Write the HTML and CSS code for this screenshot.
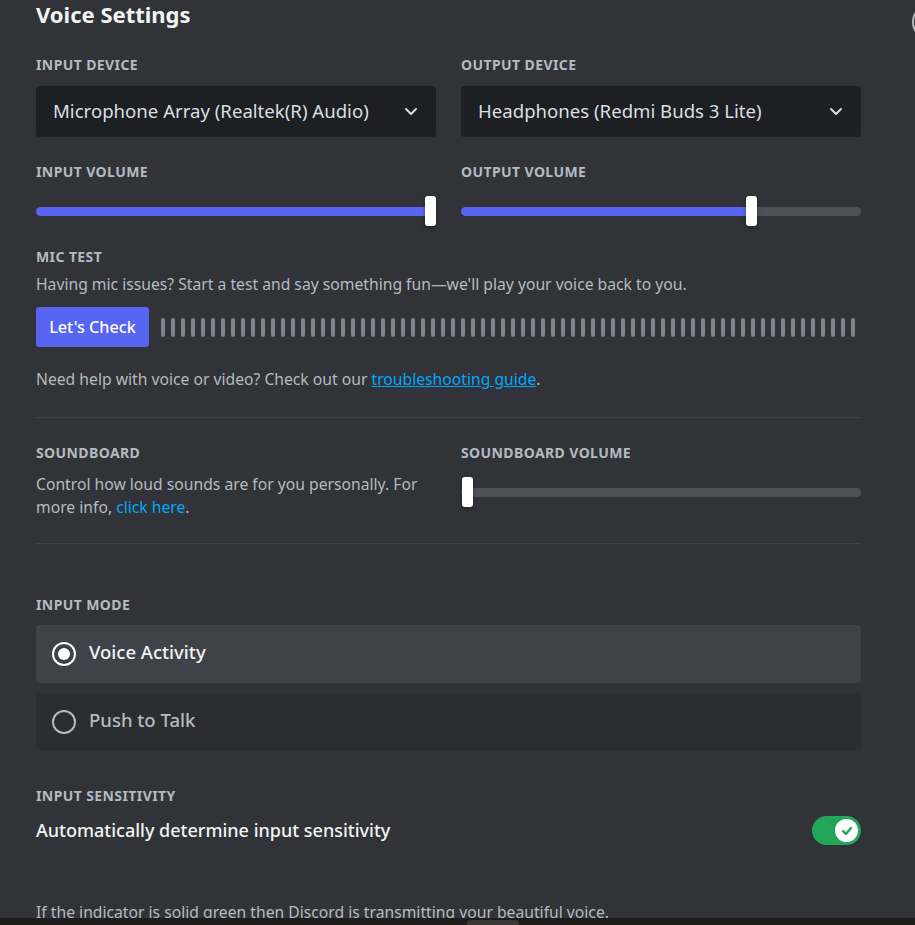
FILE: index.html
```html
<!DOCTYPE html>
<html>
<head>
<meta charset="utf-8">
<link rel="stylesheet" href="styles.css">
</head>
<body>
<div class="page">
  <h1 class="title">Voice Settings</h1>

  <div class="grid two devices">
    <div class="col">
      <div class="label">Input Device</div>
      <div class="select">
        <span>Microphone Array (Realtek(R) Audio)</span>
        <svg class="chev" width="14" height="9" viewBox="0 0 14 9"><path d="M2 2 L7 7 L12 2" fill="none" stroke="#dbdee1" stroke-width="2" stroke-linecap="round" stroke-linejoin="round"/></svg>
      </div>
    </div>
    <div class="col">
      <div class="label">Output Device</div>
      <div class="select">
        <span>Headphones (Redmi Buds 3 Lite)</span>
        <svg class="chev" width="14" height="9" viewBox="0 0 14 9"><path d="M2 2 L7 7 L12 2" fill="none" stroke="#dbdee1" stroke-width="2" stroke-linecap="round" stroke-linejoin="round"/></svg>
      </div>
    </div>
  </div>

  <div class="grid two volumes">
    <div class="col">
      <div class="label">Input Volume</div>
      <div class="slider">
        <div class="track"><div class="fill" style="width:98.5%"></div></div>
        <div class="thumb" style="left:389px"></div>
      </div>
    </div>
    <div class="col">
      <div class="label">Output Volume</div>
      <div class="slider">
        <div class="track"><div class="fill" style="width:73%"></div></div>
        <div class="thumb" style="left:285px"></div>
      </div>
    </div>
  </div>

  <div class="mic">
    <div class="label">Mic Test</div>
    <p class="desc">Having mic issues? Start a test and say something fun—we'll play your voice back to you.</p>
    <div class="mic-row">
      <button class="btn">Let's Check</button>
      <div class="bars">
        <span></span><span></span><span></span><span></span><span></span><span></span><span></span><span></span><span></span><span></span>
        <span></span><span></span><span></span><span></span><span></span><span></span><span></span><span></span><span></span><span></span>
        <span></span><span></span><span></span><span></span><span></span><span></span><span></span><span></span><span></span><span></span>
        <span></span><span></span><span></span><span></span><span></span><span></span><span></span><span></span><span></span><span></span>
        <span></span><span></span><span></span><span></span><span></span><span></span><span></span><span></span><span></span><span></span>
        <span></span><span></span><span></span><span></span><span></span><span></span><span></span><span></span><span></span><span></span>
        <span></span><span></span><span></span><span></span><span></span><span></span><span></span><span></span><span></span><span></span>
      </div>
    </div>
    <p class="desc help">Need help with voice or video? Check out our <a class="link under">troubleshooting guide</a>.</p>
  </div>

  <div class="divider d1"></div>

  <div class="grid two sound">
    <div class="col">
      <div class="label">Soundboard</div>
      <p class="desc multi">Control how loud sounds are for you personally. For more info, <a class="link">click here</a>.</p>
    </div>
    <div class="col">
      <div class="label">Soundboard Volume</div>
      <div class="slider">
        <div class="track"><div class="fill" style="width:0"></div></div>
        <div class="thumb" style="left:1px"></div>
      </div>
    </div>
  </div>

  <div class="divider d2"></div>

  <div class="mode">
    <div class="label">Input Mode</div>
    <div class="radio selected">
      <span class="circle"><span class="dot"></span></span>
      <span class="rtext">Voice Activity</span>
    </div>
    <div class="radio">
      <span class="circle"></span>
      <span class="rtext">Push to Talk</span>
    </div>
  </div>

  <div class="sens">
    <div class="label">Input Sensitivity</div>
    <div class="sens-row">
      <span class="sens-text">Automatically determine input sensitivity</span>
      <div class="toggle">
        <div class="knob">
          <svg width="14" height="14" viewBox="0 0 14 14"><path d="M3 7.2 L6 10 L11 4" fill="none" stroke="#23a55a" stroke-width="2.4" stroke-linecap="round" stroke-linejoin="round"/></svg>
        </div>
      </div>
    </div>
  </div>

  <p class="desc bottom-text">If the indicator is solid green then Discord is transmitting your beautiful voice.</p>
</div>

<div class="close"></div>
<div class="bottombar"><div class="pill"></div></div>
</body>
</html>
```

FILE: styles.css
```css
html, body {
  margin: 0;
  padding: 0;
  background: #313338;
  height: 925px;
  overflow: hidden;
}
body {
  font-family: "Noto Sans", "Open Sans", sans-serif;
  color: #dbdee1;
}
.page {
  width: 825px;
  padding-left: 36px;
}
.title {
  margin: 0;
  padding-top: 2px;
  font-size: 22px;
  line-height: 24px;
  font-weight: 700;
  color: #f2f3f5;
}
.grid.two {
  display: grid;
  grid-template-columns: 400px 400px;
  column-gap: 25px;
}
.label {
  font-size: 14px;
  line-height: 16px;
  font-weight: 700;
  text-transform: uppercase;
  color: #b5bac1;
  letter-spacing: 0.4px;
}
.devices { margin-top: 31px; }
.devices .label { margin-bottom: 13px; }
.select {
  height: 51px;
  background: #1e1f22;
  border-radius: 4px;
  display: flex;
  align-items: center;
  justify-content: space-between;
  padding: 0 18px 0 17px;
  font-size: 18.6px;
  color: #dbdee1;
}
.select span { margin-bottom: 2px; }
.chev { display: block; }

.volumes { margin-top: 27px; }
.slider {
  position: relative;
  height: 30px;
  margin-top: 16px;
}
.track {
  position: absolute;
  left: 0;
  right: 0;
  top: 11px;
  height: 9px;
  border-radius: 5px;
  background: #4e5058;
  overflow: hidden;
}
.fill {
  height: 100%;
  background: #5865f2;
  border-radius: 5px;
}
.thumb {
  position: absolute;
  top: 0;
  width: 11px;
  height: 30px;
  background: #fff;
  border-radius: 3px;
  box-shadow: 0 2px 4px rgba(0,0,0,0.35);
}

.mic { margin-top: 23px; }
.desc {
  margin: 0;
  font-size: 15.7px;
  line-height: 20px;
  color: #b5bac1;
}
.mic .desc { margin-top: 9px; }
.mic-row {
  display: flex;
  align-items: center;
  gap: 12px;
  margin-top: 13px;
}
.btn {
  width: 113px;
  height: 40px;
  border: 0;
  border-radius: 3px;
  background: #5865f2;
  color: #fff;
  font-family: inherit;
  font-size: 16.2px;
  font-weight: 500;
  padding: 0;
}
.bars {
  display: flex;
  gap: 6px;
  align-items: center;
}
.bars span {
  width: 4px;
  height: 19px;
  border-radius: 2px;
  background: #80848e;
}
.mic .help { margin-top: 22px; }
.link { color: #00a8fc; }
.link.under { text-decoration: underline; }

.divider {
  height: 1px;
  background: #3f4147;
}
.d1 { margin-top: 28px; }
.sound { margin-top: 27px; }
.desc.multi {
  margin-top: 12px;
  line-height: 23px;
  padding-right: 15px;
}
.sound .slider { margin-top: 16px; }
.d2 { margin-top: 24px; }

.mode { margin-top: 53px; }
.radio {
  height: 58px;
  margin-top: 10px;
  border-radius: 4px;
  background: #2b2d31;
  display: flex;
  align-items: center;
  padding-left: 16px;
  gap: 13px;
}
.mode .label + .radio { margin-top: 12px; }
.radio.selected { background: #404249; }
.circle {
  width: 20px;
  height: 20px;
  border: 2px solid #b5bac1;
  border-radius: 50%;
  display: flex;
  align-items: center;
  justify-content: center;
}
.radio.selected .circle { border-color: #fff; }
.dot {
  width: 12px;
  height: 12px;
  border-radius: 50%;
  background: #fff;
}
.rtext {
  font-size: 18.5px;
  line-height: 24px;
  margin-bottom: 5px;
  font-weight: 500;
  color: #b5bac1;
}
.radio.selected .rtext { color: #f2f3f5; }

.sens { margin-top: 37px; }
.sens-row {
  margin-top: 12px;
  height: 29px;
  display: flex;
  align-items: center;
  justify-content: space-between;
}
.sens-text {
  font-size: 18px;
  line-height: 24px;
  margin-bottom: 2px;
  font-weight: 500;
  color: #f2f3f5;
}
.toggle {
  width: 49px;
  height: 29px;
  border-radius: 15px;
  background: #23a55a;
  display: flex;
  align-items: center;
  justify-content: flex-end;
  padding-right: 3px;
  box-sizing: border-box;
}
.knob {
  width: 23px;
  height: 23px;
  border-radius: 50%;
  background: #fff;
  display: flex;
  align-items: center;
  justify-content: center;
}
.knob svg { display: block; }
.bottom-text { margin-top: 57px; }

.close {
  position: absolute;
  left: 912px;
  top: 4px;
  width: 32px;
  height: 32px;
  border: 2px solid #b5bac1;
  border-radius: 50%;
}
.bottombar {
  position: absolute;
  left: 0;
  right: 0;
  top: 918px;
  height: 7px;
  background: #1f1d1c;
}
.pill {
  position: absolute;
  left: 467px;
  top: 2px;
  width: 52px;
  height: 8px;
  border-radius: 4px;
  background: #3a3836;
}
```
